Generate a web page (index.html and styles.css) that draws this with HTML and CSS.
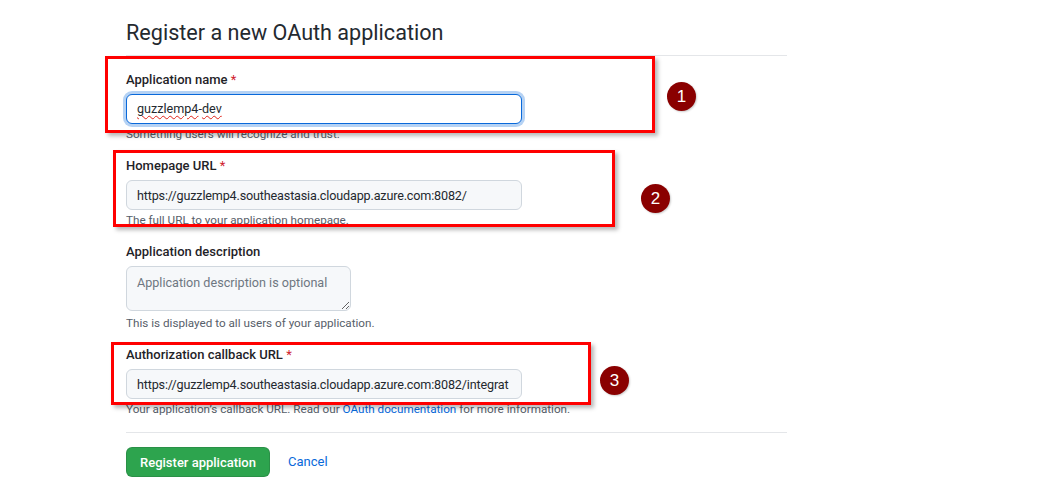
FILE: index.html
```html
<!DOCTYPE html>
<html lang="en">
<head>
<meta charset="utf-8">
<title>Register a new OAuth application</title>
<link rel="stylesheet" href="styles.css">
</head>
<body>
<div class="page">
  <div class="column">
    <div class="subhead">
      <h2 class="subhead-heading">Register a new OAuth application</h2>
    </div>

    <form class="oauth-form">
      <div class="form-group">
        <label class="form-label">Application name <span class="req">*</span></label>
        <div class="form-control focused" role="textbox"><span class="misspelled">guzzlemp4</span>-<span class="misspelled">dev</span></div>
        <p class="note">Something users will recognize and trust.</p>
      </div>

      <div class="form-group">
        <label class="form-label">Homepage URL <span class="req">*</span></label>
        <input class="form-control url" type="text" value="https://guzzlemp4.southeastasia.cloudapp.azure.com:8082/">
        <p class="note">The full URL to your application homepage.</p>
      </div>

      <div class="form-group">
        <label class="form-label">Application description</label>
        <textarea class="form-control textarea" placeholder="Application description is optional"></textarea>
        <p class="note note-textarea">This is displayed to all users of your application.</p>
      </div>

      <div class="form-group">
        <label class="form-label">Authorization callback URL <span class="req">*</span></label>
        <input class="form-control url" type="text" value="https://guzzlemp4.southeastasia.cloudapp.azure.com:8082/integrat">
        <p class="note">Your application’s callback URL. Read our <a href="#">OAuth documentation</a> for more information.</p>
      </div>

      <div class="actions">
        <button type="button" class="btn-primary">Register application</button>
        <a class="cancel" href="#">Cancel</a>
      </div>
    </form>
  </div>

  <div class="callout box-1"></div>
  <div class="callout box-2"></div>
  <div class="callout box-3"></div>
  <div class="step step-1">1</div>
  <div class="step step-2">2</div>
  <div class="step step-3">3</div>
</div>
</body>
</html>
```

FILE: styles.css
```css
* { box-sizing: border-box; }

html, body {
  margin: 0;
  padding: 0;
  background: #ffffff;
}

body {
  font-family: Roboto, "Liberation Sans", Arial, sans-serif;
  color: #24292f;
  font-size: 13px;
  line-height: 20px;
}

.page {
  position: relative;
  width: 1044px;
  height: 498px;
  overflow: hidden;
}

.column {
  margin-left: 126px;
  width: 661px;
  padding-top: 18px;
}

.subhead {
  border-bottom: 1px solid #e4e6e9;
  padding-bottom: 7px;
}

.subhead-heading {
  margin: 0;
  font-size: 21.6px;
  line-height: 30px;
  font-weight: 400;
  color: #24292f;
}

.form-group {
  margin-top: 13px;
}

.form-group:first-child {
  margin-top: 14px;
}

.form-label {
  display: block;
  font-weight: 500;
  font-size: 13px;
  line-height: 20px;
  margin-bottom: 4px;
  color: #1f2328;
}

.req {
  color: #cf222e;
  font-weight: 400;
}

.form-control {
  display: block;
  width: 396px;
  height: 30px;
  padding: 0 11px 0 10px;
  font-family: Roboto, "Liberation Sans", Arial, sans-serif;
  font-size: 12.6px;
  line-height: 28px;
  color: #24292f;
  background: #f6f8fa;
  border: 1px solid #d0d7de;
  border-radius: 6px;
  outline: none;
  margin: 0;
}

.form-control.url {
  letter-spacing: -0.16px;
}

.form-control.focused {
  background: #ffffff;
  border-color: #0969da;
  box-shadow: 0 0 0 3px rgba(9, 105, 218, 0.3);
}

.misspelled {
  text-decoration: underline wavy #e0241b;
  text-decoration-thickness: 1px;
  text-underline-offset: 2px;
}

.textarea {
  width: 225px;
  height: 45px;
  padding: 6px 10px;
  line-height: 20px;
  resize: vertical;
}

.textarea::placeholder {
  color: #6e7781;
}

.note {
  margin: 1px 0 0;
  font-size: 11.7px;
  line-height: 18px;
  color: #57606a;
}

.note-textarea {
  margin-top: 3px;
}

.note a {
  color: #0969da;
  text-decoration: none;
}

.actions {
  margin-top: 14px;
  border-top: 1px solid #e4e6e9;
  padding-top: 14px;
  display: flex;
  align-items: center;
  gap: 18px;
}

.btn-primary {
  height: 30px;
  width: 144px;
  padding: 0;
  white-space: nowrap;
  background: #2da44e;
  color: #ffffff;
  border: 1px solid rgba(27, 31, 36, 0.15);
  border-radius: 6px;
  font-family: Roboto, "Liberation Sans", Arial, sans-serif;
  font-size: 13px;
  font-weight: 500;
  cursor: pointer;
}

.cancel {
  color: #0969da;
  text-decoration: none;
  font-size: 13px;
}

/* annotation overlays */
.callout {
  position: absolute;
  border: 3px solid #ff0000;
  box-shadow: 3px 3px 4px rgba(0, 0, 0, 0.28);
  pointer-events: none;
}

.box-1 { left: 105px; top: 56px; width: 550px; height: 77px; }
.box-2 { left: 113px; top: 150px; width: 502px; height: 77px; }
.box-3 { left: 111px; top: 342px; width: 480px; height: 63px; }

.step {
  position: absolute;
  width: 29px;
  height: 29px;
  border-radius: 50%;
  background: #8a0000;
  color: #ffffff;
  font-family: "Liberation Sans", Arial, sans-serif;
  font-size: 17px;
  line-height: 29px;
  text-align: center;
  box-shadow: 1px 1px 2px rgba(0, 0, 0, 0.2);
}

.step-1 { left: 667px; top: 82px; }
.step-2 { left: 641px; top: 184px; }
.step-3 { left: 600px; top: 366px; }
```
